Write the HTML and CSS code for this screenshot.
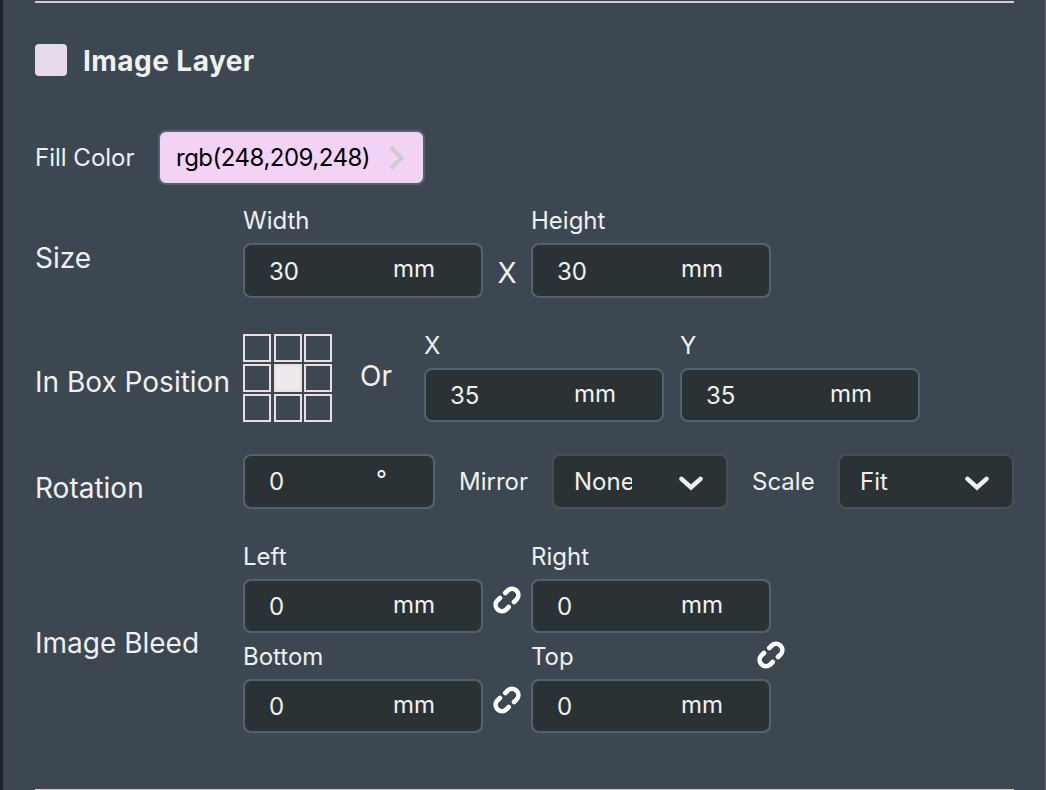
FILE: index.html
```
<!DOCTYPE html>
<html lang="en">
<head>
  <meta charset="UTF-8">
  <meta name="viewport" content="width=device-width, initial-scale=1.0">
  <title>Image Layer</title>
  <link rel="stylesheet" href="styles.css">
</head>
<body>
  <svg class="sprite">
    <symbol id="link" viewBox="0 0 28 28">
      <path d="M12.300 7l2.500-2.500a6.300 6.300 0 0 1 8.900 8.900L21 16M15.700 21l-2.500 2.500a6.300 6.300 0 0 1-8.900-8.900L7 12" />
    </symbol>
    <symbol id="chevron" viewBox="0 0 24 15">
      <path d="M2.5 2.8L12 11.500l9.500-8.700" />
    </symbol>
  </svg>

  <div class="panel">
    <div class="layer">
      <div class="title-row">
        <span class="swatch"></span>
        <h2>Image Layer</h2>
      </div>

      <div class="row fill-row">
        <span class="small-label">Fill Color</span>
        <button type="button" class="color-button">
          <span>rgb(248,209,248)</span>
          <svg class="arrow" viewBox="0 0 16 24"><path d="M2 1.500l10.500 10.500L2 22.500" /></svg>
        </button>
      </div>

      <div class="row size-row">
        <span class="row-label">Size</span>
        <div class="field">
          <label>Width</label>
          <div class="input"><span class="value">30</span><span class="unit">mm</span></div>
        </div>
        <span class="times">X</span>
        <div class="field">
          <label>Height</label>
          <div class="input"><span class="value">30</span><span class="unit">mm</span></div>
        </div>
      </div>

      <div class="row position-row">
        <span class="row-label">In Box Position</span>
        <div class="anchor-grid">
          <i></i><i></i><i></i>
          <i></i><i class="active"></i><i></i>
          <i></i><i></i><i></i>
        </div>
        <span class="or">Or</span>
        <div class="field">
          <label>X</label>
          <div class="input"><span class="value">35</span><span class="unit">mm</span></div>
        </div>
        <div class="field">
          <label>Y</label>
          <div class="input"><span class="value">35</span><span class="unit">mm</span></div>
        </div>
      </div>

      <div class="row rotation-row">
        <span class="row-label">Rotation</span>
        <div class="input degrees"><span class="value">0</span><span class="unit">°</span></div>
        <span class="small-label mirror-label">Mirror</span>
        <div class="select"><span class="option">None</span><svg class="chevron"><use href="#chevron" /></svg></div>
        <span class="small-label scale-label">Scale</span>
        <div class="select"><span class="option">Fit</span><svg class="chevron"><use href="#chevron" /></svg></div>
      </div>

      <div class="row bleed-row">
        <span class="row-label">Image Bleed</span>
        <div class="bleed-grid">
          <div class="field">
            <label>Left</label>
            <div class="input"><span class="value">0</span><span class="unit">mm</span></div>
          </div>
          <svg class="link"><use href="#link" /></svg>
          <div class="field">
            <label>Right</label>
            <div class="input"><span class="value">0</span><span class="unit">mm</span></div>
          </div>
          <div class="field">
            <label>Bottom</label>
            <div class="input"><span class="value">0</span><span class="unit">mm</span></div>
          </div>
          <svg class="link"><use href="#link" /></svg>
          <div class="field">
            <label>Top</label>
            <div class="input"><span class="value">0</span><span class="unit">mm</span></div>
          </div>
        </div>
        <svg class="link link-all"><use href="#link" /></svg>
      </div>
    </div>
  </div>
</body>
</html>
```
FILE: styles.css
```
* {
  box-sizing: border-box;
}
body {
  margin: 0;
  font-family: Inter, sans-serif;
  font-size: 24px;
  font-weight: 400;
  color: #f0f0f0;
  background: #3c4752;
}
.sprite {
  display: none;
}
.panel {
  height: 790px;
  padding: 1px 31px 0 32px;
  border-left: 3px solid #1d2226;
  border-right: 1px solid #5f6468;
  overflow: hidden;
}
.layer {
  height: 790px;
  width: 979px;
  border-top: 2px solid #d5ccd4;
  border-bottom: 2px solid #d5ccd4;
}
.title-row {
  display: flex;
  align-items: center;
  gap: 16px;
  height: 32px;
  margin-top: 41px;
}
.swatch {
  width: 32px;
  height: 32px;
  border-radius: 4px;
  background: #e6d9eb;
}
h2 {
  margin: 2px 0 0;
  font-size: 28px;
  font-weight: 700;
  line-height: 34px;
  letter-spacing: 0.45px;
}
.row {
  display: flex;
}
.row-label {
  flex: none;
  width: 208px;
  font-size: 28px;
  line-height: 34px;
  white-space: nowrap;
}
.small-label {
  line-height: 30px;
}
.fill-row {
  align-items: center;
  height: 55px;
  margin-top: 54px;
}
.fill-row .small-label {
  width: 123px;
}
.color-button {
  display: flex;
  align-items: center;
  justify-content: space-between;
  width: 267px;
  height: 55px;
  padding: 0 18px 0 16px;
  border: 2px solid #526373;
  border-radius: 8px;
  background: #f3d3f5;
  color: #000;
  font: inherit;
  letter-spacing: -0.5px;
  cursor: pointer;
}
.arrow {
  width: 16px;
  height: 24px;
  fill: none;
  stroke: #cccccc;
  stroke-width: 4;
}
.field label {
  display: block;
  height: 37px;
  line-height: 30px;
}
.input {
  display: flex;
  width: 240px;
  height: 55px;
  padding-left: 24px;
  border: 2px solid #526373;
  border-radius: 8px;
  background: #2b3235;
  line-height: 30px;
}
.value {
  width: 124px;
  margin-top: 11px;
}
.unit {
  margin-top: 9px;
}
.size-row {
  margin-top: 21px;
}
.size-row .row-label {
  margin-top: 35px;
}
.size-row .value {
  margin-top: 12px;
}
.times {
  width: 48px;
  margin-top: 50px;
  font-size: 28px;
  line-height: 34px;
  text-align: center;
}
.position-row {
  height: 92px;
  margin-top: 33px;
}
.position-row .row-label {
  margin-top: 34px;
}
.position-row .input,
.bleed-row .input {
  height: 54px;
}
.position-row .field {
  margin-right: 16px;
}
.anchor-grid {
  display: grid;
  grid-template-columns: 31px 30px 28px;
  grid-template-rows: 30px 30px 28px;
  margin-top: 3px;
}
.anchor-grid i {
  width: 28px;
  height: 28px;
  border: 2px solid #eadfe0;
}
.anchor-grid .active {
  background: #eeeaeb;
}
.or {
  width: 92px;
  margin-top: 28px;
  padding-left: 28px;
  font-size: 28px;
  line-height: 34px;
}
.rotation-row {
  height: 55px;
  margin-top: 31px;
}
.rotation-row .row-label {
  margin-top: 17px;
}
.degrees {
  width: 192px;
}
.degrees .value {
  width: 107px;
}
.rotation-row .small-label {
  margin-top: 13px;
  padding-left: 24px;
}
.mirror-label {
  width: 117px;
}
.scale-label {
  width: 110px;
}
.select {
  display: flex;
  justify-content: space-between;
  width: 176px;
  height: 55px;
  padding: 0 23px 0 20px;
  border: 2px solid #475052;
  border-radius: 8px;
  background: #2b3235;
}
/* long option names are cut off before the chevron */
.option {
  max-width: 58px;
  margin-top: 11px;
  line-height: 30px;
  overflow: hidden;
}
.chevron {
  width: 24px;
  height: 15px;
  margin-top: 20px;
  fill: none;
  stroke: #f0f0f0;
  stroke-width: 4.5;
  stroke-linecap: round;
}
.bleed-row {
  margin-top: 33px;
}
.bleed-row .row-label {
  margin-top: 84px;
}
.bleed-grid {
  display: grid;
  grid-template-columns: 240px 48px 240px;
  row-gap: 9px;
}
.link {
  width: 28px;
  height: 28px;
  margin: 44px 0 0 10px;
  fill: none;
  stroke: #fff;
  stroke-width: 4.6;
  stroke-linecap: round;
}
.link-all {
  margin: 99px 0 0 -14px;
}
```
